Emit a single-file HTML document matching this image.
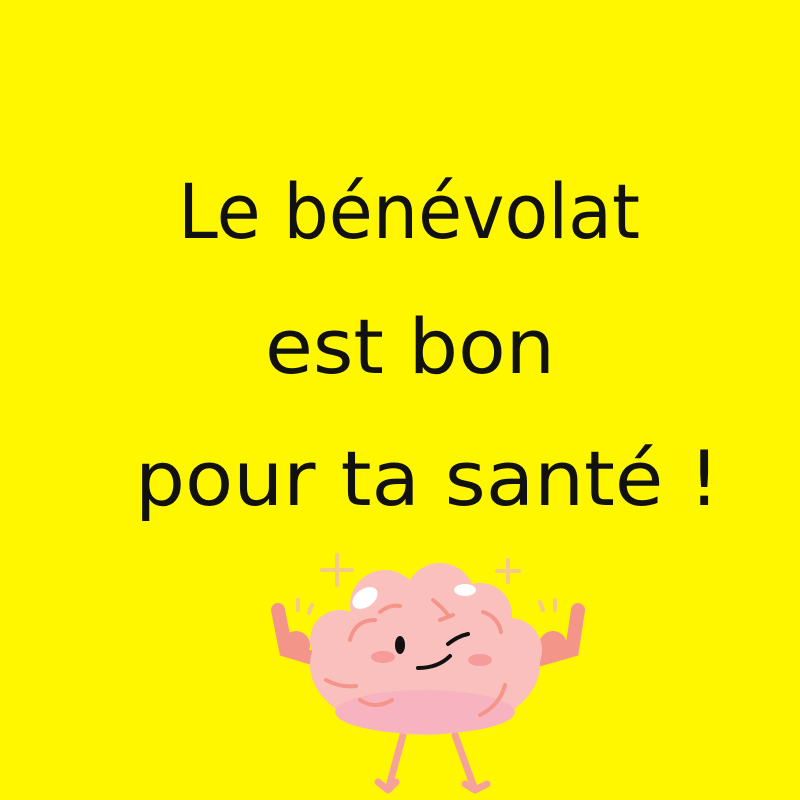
<!DOCTYPE html>
<html><head><style>
html,body{margin:0;padding:0;background:#fff700;}
svg{display:block}
</style></head><body>
<svg width="800" height="800" viewBox="0 0 800 800" xmlns="http://www.w3.org/2000/svg">
<rect width="800" height="800" fill="#fff700"/>
<g font-family="'DejaVu Sans','Liberation Sans',sans-serif" font-size="76" fill="#111">
<text x="178" y="238" textLength="462" lengthAdjust="spacingAndGlyphs">Le bénévolat</text>
<text x="265" y="373" textLength="290" lengthAdjust="spacingAndGlyphs">est bon</text>
<text x="135" y="505" textLength="585" lengthAdjust="spacingAndGlyphs">pour ta santé !</text>
</g>
<g stroke="#f5c98a" stroke-width="4" stroke-linecap="round">
<path d="M337 555v30M322 570h30"/><path d="M508 560v22M497 571h22"/>
<path d="M298 600v10M312 605l-3 8M540 602l3 8M555 600v10"/>
</g>
<g stroke="#f4a29a" stroke-width="7" stroke-linecap="round" fill="none">
<path d="M403 735l-15 55M388 790l-10-8M388 790l8-8"/>
<path d="M455 735l20 55M475 790l-10-6M475 790l12-6"/>
</g>
<g stroke="#f4958a" stroke-width="14" stroke-linecap="round" fill="none">
<path d="M278 610l8 40 40 12"/><path d="M578 610l-6 40-42 12"/>
</g>
<circle cx="296" cy="645" r="14" fill="#f4958a"/><circle cx="553" cy="645" r="14" fill="#f4958a"/>
<g fill="#f9c0bd">
<ellipse cx="425" cy="665" rx="115" ry="70"/>
<circle cx="385" cy="605" r="35"/><circle cx="440" cy="598" r="35"/><circle cx="480" cy="615" r="32"/>
<circle cx="340" cy="640" r="30"/><circle cx="510" cy="650" r="32"/>
</g>
<ellipse cx="425" cy="712" rx="90" ry="22" fill="#f7b4c0"/>
<ellipse cx="365" cy="598" rx="14" ry="9" fill="#fff" transform="rotate(-35 365 598)"/>
<ellipse cx="465" cy="590" rx="11" ry="6" fill="#fff"/>
<g stroke="#f4958a" stroke-width="4" stroke-linecap="round" fill="none">
<path d="M350 640q5-20 25-20M380 612q10-8 20-6M433 600q10 8 15 15M440 620l13-5M483 612q15 5 18 20M326 680q15 8 30 6M360 700q15 10 32 0M480 715q20-10 25-30"/>
</g>
<ellipse cx="383" cy="657" rx="12" ry="6" fill="#f69a9a"/>
<ellipse cx="480" cy="660" rx="12" ry="6" fill="#f69a9a"/>
<ellipse cx="400" cy="645" rx="5" ry="9" fill="#111"/>
<g stroke="#111" stroke-width="4" stroke-linecap="round" fill="none">
<path d="M448 644q10-8 20-10M418 668q20 0 32-12"/>
</g>
</svg>
</body></html>
